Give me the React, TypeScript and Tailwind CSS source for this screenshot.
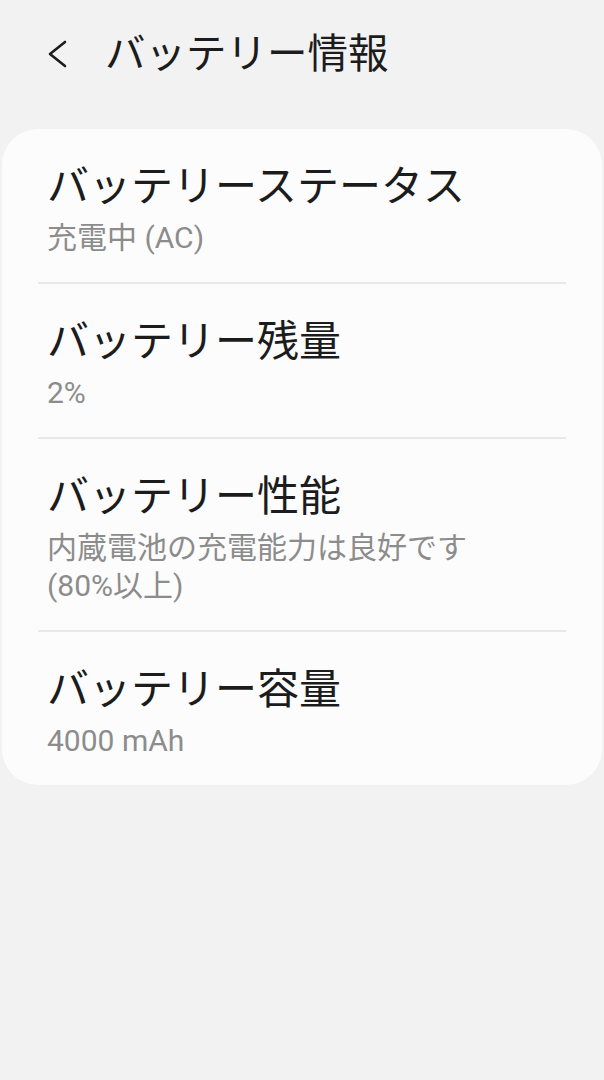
import React from 'react';

interface InfoItem {
  title: string;
  lines: string[];
}

const items: InfoItem[] = [
  { title: 'バッテリーステータス', lines: ['充電中 (AC)'] },
  { title: 'バッテリー残量', lines: ['2%'] },
  { title: 'バッテリー性能', lines: ['内蔵電池の充電能力は良好です', '(80%以上)'] },
  { title: 'バッテリー容量', lines: ['4000 mAh'] },
];

function BackChevron() {
  return (
    <svg width="24" height="30" viewBox="0 0 24 30" fill="none">
      <polyline
        points="20,3 5,15 20,27"
        stroke="#1c1c1c"
        strokeWidth="2.6"
        strokeLinecap="round"
        strokeLinejoin="round"
      />
    </svg>
  );
}

export default function App() {
  return (
    <div
      className="min-h-[1080px] w-[604px] bg-[#f2f2f2] overflow-hidden"
      style={{ fontFamily: 'Roboto, "Noto Sans CJK JP", sans-serif' }}
    >
      <header className="flex items-center h-[110px] pl-[45px] pb-[2px]">
        <BackChevron />
        <h1 className="ml-[36px] text-[40.5px] leading-[50px] text-[#1c1c1c] font-normal">
          バッテリー情報
        </h1>
      </header>

      <div className="mt-[19px] mx-[2px] bg-[#fcfcfc] rounded-[36px]">
        {items.map((item, i) => (
          <div key={item.title}>
            {i > 0 && <div className="mx-[36px] h-[2px] bg-[#e8e8e8]" />}
            <div className="px-[45px] pt-[32px] pb-[25px]">
              <div className="text-[42px] leading-[52px] text-[#1c1c1c]">{item.title}</div>
              <div className="mt-[6px] text-[30px] leading-[38px] text-[#8c8c8c]">
                {item.lines.map((l) => (
                  <div key={l}>{l}</div>
                ))}
              </div>
            </div>
          </div>
        ))}
      </div>
    </div>
  );
}
